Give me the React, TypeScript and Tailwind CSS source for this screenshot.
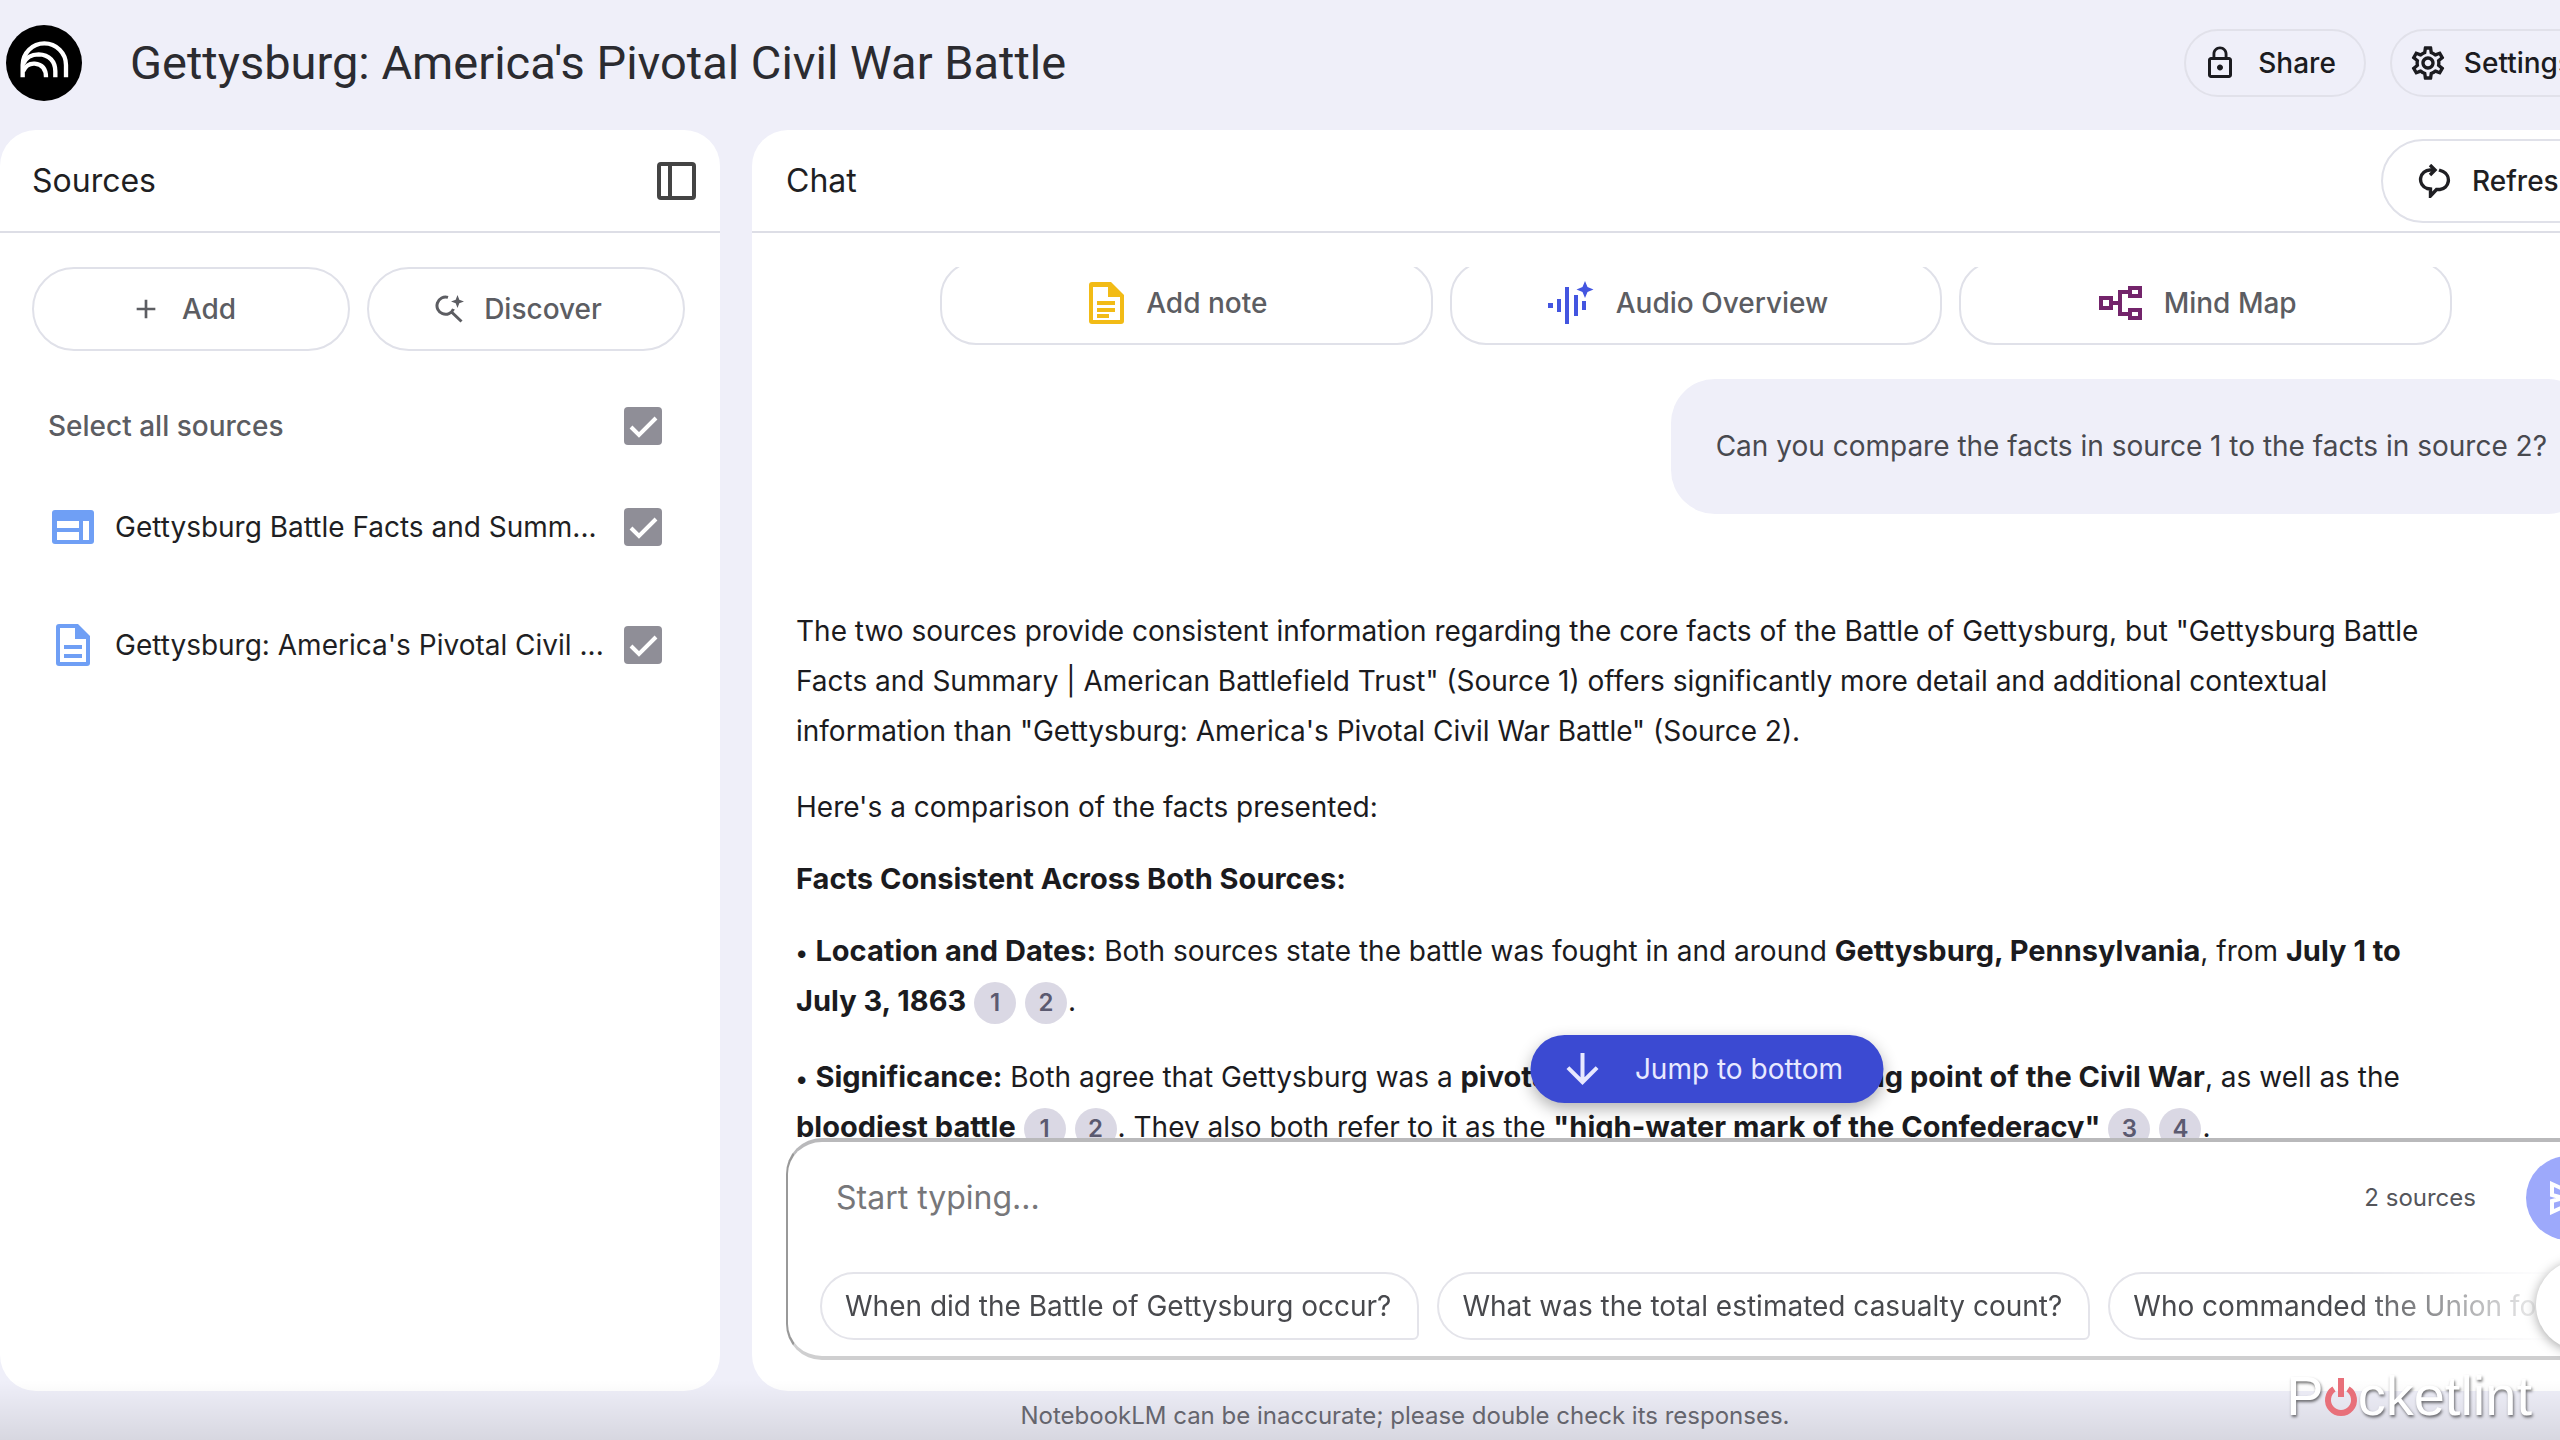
import type { ReactNode } from 'react';
import { MdAdd, MdArrowDownward, MdLockOutline, MdOutlineSettings } from 'react-icons/md';

function Logo() {
  return (
    <svg viewBox="18 45 228 228" className="size-[76px] shrink-0" role="img" aria-label="NotebookLM">
      <circle cx="132" cy="159" r="114" fill="#000" />
      <g fill="none" stroke="#fff" strokeWidth="13">
        <path d="M68 202V165A65 65 0 0 1 198 165V202" />
        <path d="M69 162C80 138 98 133 116 133C148 134 166 155 166 184V202" />
        <path d="M69 184C78 165 90 160 104 161C127 163 138 178 138 202" />
      </g>
    </svg>
  );
}

function PanelIcon() {
  return (
    <svg viewBox="0 0 39 38" className="h-[38px] w-[39px]" fill="none" stroke="#444" aria-hidden="true">
      <rect x="2" y="2" width="35" height="34" rx="2" strokeWidth="4" />
      <path d="M13 2V36" strokeWidth="4" />
    </svg>
  );
}

function DiscoverIcon() {
  return (
    <svg viewBox="0 0 30 28" className="h-7 w-[30px]" aria-hidden="true">
      <path
        d="M14 2.4A8.6 8.6 0 1 0 19.5 14M17 16.5L27.5 26.5"
        fill="none"
        stroke="currentColor"
        strokeWidth="3"
      />
      <path d="M23.5 0L25.3 4.7L30 6.5L25.3 8.3L23.5 13L21.7 8.3L17 6.5L21.7 4.7Z" fill="currentColor" />
    </svg>
  );
}

function RefreshIcon() {
  return (
    <svg
      viewBox="0 0 34 34"
      className="size-[34px]"
      fill="none"
      stroke="currentColor"
      strokeWidth="3.4"
      aria-hidden="true"
    >
      <path d="M16 6H12A9.5 9.5 0 0 0 9 24.5L12.5 25V32L18.5 25.5H22A9.5 9.5 0 0 0 25 7.5L21 6" />
      <path d="M12 1L17 6L12 11" />
    </svg>
  );
}

function WebIcon() {
  return (
    <svg viewBox="0 0 42 34" className="h-[34px] w-[42px]" aria-hidden="true">
      <rect width="42" height="34" rx="3" fill="#6f9ff5" />
      <path d="M5 11H27V18H5ZM5 22H27V30H5ZM31 11H37V30H31Z" fill="#fff" />
    </svg>
  );
}

function DocIcon() {
  return (
    <svg viewBox="0 0 34 42" className="h-[42px] w-[34px]" aria-hidden="true">
      <path d="M3 0H22L34 12V39a3 3 0 0 1-3 3H3a3 3 0 0 1-3-3V3a3 3 0 0 1 3-3Z" fill="#6f9ff5" />
      <path d="M4 4H19V15H30V38H4Z" fill="#fff" />
      <path d="M8 21H26V25H8ZM8 30H26V34H8Z" fill="#6f9ff5" />
    </svg>
  );
}

function NoteIcon() {
  return (
    <svg viewBox="0 0 35 42" className="h-[42px] w-[35px]" aria-hidden="true">
      <path d="M3 0H22L35 13V39a3 3 0 0 1-3 3H3a3 3 0 0 1-3-3V3a3 3 0 0 1 3-3Z" fill="#f2bb16" />
      <path d="M4 5H19V15H31V38H4Z" fill="#fff" />
      <path d="M8 19H26V23H8ZM8 26H26V30H8ZM8 32H20V36H8Z" fill="#f2bb16" />
    </svg>
  );
}

function AudioIcon() {
  return (
    <svg viewBox="26 18 46 44" className="h-11 w-[46px]" fill="#4355e0" aria-hidden="true">
      <path d="M26 40h5v5h-5zM35 36h4v13h-4zM43 24h4v37h-4zM52 32h4v21h-4zM60 38h4v9h-4z" />
      <path d="M63 18L65.5 24L71.5 26.5L65.5 29L63 35L60.5 29L54.5 26.5L60.5 24Z" />
    </svg>
  );
}

function MindMapIcon() {
  return (
    <svg
      viewBox="0 0 43 34"
      className="h-[34px] w-[43px]"
      fill="none"
      stroke="#73246b"
      strokeWidth="4"
      aria-hidden="true"
    >
      <path d="M2 12H12V22H2ZM31 2H41V10H31ZM31 24H41V32H31Z" />
      <path d="M12 17H21M31 6H21V28H31" />
    </svg>
  );
}

function SendIcon() {
  return (
    <svg viewBox="0 0 36 34" className="h-[34px] w-9" fill="none" stroke="#fff" strokeWidth="4" aria-hidden="true">
      <path d="M2 3L33 17L2 31V20L13 17L2 14Z" />
    </svg>
  );
}

function Checkbox({ id }: { id: string }) {
  return (
    <span className="grid shrink-0">
      <input
        id={id}
        type="checkbox"
        defaultChecked
        className="peer col-start-1 row-start-1 size-[38px] appearance-none rounded-sm bg-[#8f8e97]"
      />
      <svg
        viewBox="0 0 38 38"
        className="pointer-events-none invisible col-start-1 row-start-1 size-[38px] peer-checked:visible"
        fill="none"
        stroke="#fff"
        strokeWidth="4"
        aria-hidden="true"
      >
        <path d="M7 20L15 28L32 11" />
      </svg>
    </span>
  );
}

function SourceRow({ id, icon, title }: { id: string; icon: ReactNode; title: string }) {
  return (
    <li className="flex items-center">
      <span className="flex w-[42px] shrink-0 justify-center">{icon}</span>
      <label htmlFor={id} className="ml-[21px] flex-1 whitespace-nowrap text-[28px] leading-9 text-[#1f1f23]">
        {title}
      </label>
      <Checkbox id={id} />
    </li>
  );
}

function PillButton({ icon, children }: { icon: ReactNode; children: ReactNode }) {
  return (
    <button
      type="button"
      className="flex h-[84px] items-center justify-center gap-5 rounded-full border-2 border-[#e0e1e9] pr-4 text-[28px] font-medium text-[#5c5d62]"
    >
      {icon}
      {children}
    </button>
  );
}

function SourcesPanel() {
  return (
    <section className="flex w-[720px] shrink-0 flex-col rounded-[36px] bg-white">
      <div className="flex h-[103px] items-center justify-between border-b-2 border-[#dddee6] pr-6 pl-8">
        <h2 className="text-[32px] text-[#1f1f23]">Sources</h2>
        <button type="button" aria-label="Collapse sources">
          <PanelIcon />
        </button>
      </div>
      <div className="mt-[34px] grid grid-cols-2 gap-[17px] pr-[35px] pl-8">
        <PillButton icon={<MdAdd className="size-8" />}>Add</PillButton>
        <PillButton icon={<DiscoverIcon />}>Discover</PillButton>
      </div>
      <div className="mt-14 flex items-center justify-between pr-[58px] pl-12">
        <label htmlFor="all" className="text-[28px] leading-9 font-medium text-[#5c5d62]">
          Select all sources
        </label>
        <Checkbox id="all" />
      </div>
      <ul className="mt-[63px] flex flex-col gap-[78px] pr-[58px] pl-[52px]">
        <SourceRow id="s1" icon={<WebIcon />} title="Gettysburg Battle Facts and Summ..." />
        <SourceRow id="s2" icon={<DocIcon />} title="Gettysburg: America's Pivotal Civil ..." />
      </ul>
    </section>
  );
}

function Action({ icon, children }: { icon: ReactNode; children: ReactNode }) {
  return (
    <button
      type="button"
      className="flex h-[84px] items-center justify-center gap-[22px] rounded-[36px] border-2 border-[#e0e1e9] pr-4 text-[28px] font-medium text-[#5c5d62]"
    >
      {icon}
      {children}
    </button>
  );
}

function Cite({ n }: { n: number }) {
  return (
    <button
      type="button"
      className="mr-[9px] inline-flex size-[42px] items-center justify-center rounded-full bg-[#dad8e4] align-middle text-2xl font-semibold text-[#5b5a70]"
    >
      {n}
    </button>
  );
}

function Bold({ children }: { children: ReactNode }) {
  return <b className="text-[29px]">{children}</b>;
}

function Answer() {
  return (
    <div className="mt-[92px] ml-11 flex flex-col gap-[22px] text-[28px] leading-[50px] whitespace-nowrap text-[#1b1b1e]">
      <p>
        The two sources provide consistent information regarding the core facts of the Battle of Gettysburg, but
        "Gettysburg Battle
        <br />
        Facts and Summary | American Battlefield Trust" (Source 1) offers significantly more detail and additional
        contextual
        <br />
        information than "Gettysburg: America's Pivotal Civil War Battle" (Source 2).
      </p>
      <p className="mt-1">Here's a comparison of the facts presented:</p>
      <h3>
        <Bold>Facts Consistent Across Both Sources:</Bold>
      </h3>
      <p>
        <b className="mr-2 text-2xl">•</b>
        <Bold>Location and Dates:</Bold> Both sources state the battle was fought in and around{' '}
        <Bold>Gettysburg, Pennsylvania</Bold>, from <Bold>July 1 to</Bold>
        <br />
        <Bold>July 3, 1863</Bold> <Cite n={1} />
        <Cite n={2} />
        <span className="-ml-2">.</span>
      </p>
      <p className="mt-1">
        <b className="mr-2 text-2xl">•</b>
        <Bold>Significance:</Bold> Both agree that Gettysburg was a{' '}
        <Bold>pivotal moment and the turning point of the Civil War</Bold>, as well as the
        <br />
        <Bold>bloodiest battle</Bold> <Cite n={1} />
        <Cite n={2} />
        <span className="-ml-2">.</span> They also both refer to it as the{' '}
        <Bold>"high-water mark of the Confederacy"</Bold> <Cite n={3} />
        <Cite n={4} />
        <span className="-ml-2">.</span>
      </p>
    </div>
  );
}

function Composer() {
  const chips = [
    'When did the Battle of Gettysburg occur?',
    'What was the total estimated casualty count?',
    'Who commanded the Union forces?',
  ];
  return (
    <div className="relative mr-3 mb-[31px] ml-[34px] rounded-[36px] border-x-2 border-y-4 border-x-[#999] border-t-[#b9b9bb] border-b-[#cfcfd0] bg-white pt-[14px] pb-4">
      <button
        type="button"
        className="absolute -top-[107px] left-1/2 flex h-[68px] w-[353px] -translate-x-1/2 items-center justify-center gap-7 rounded-full bg-[#3b4ad2] pr-3 text-[28px] text-[#e8e9ff] shadow-[0_6px_16px_rgba(0,0,0,0.3)]"
      >
        <MdArrowDownward className="size-12" /> Jump to bottom
      </button>
      <div className="flex h-[84px] items-center pr-4 pl-12">
        <input
          type="text"
          aria-label="Message"
          placeholder="Start typing..."
          className="min-w-0 flex-1 text-[32px] outline-none placeholder:text-[#77777a]"
        />
        <span className="mr-[50px] text-2xl text-[#55565b]">2 sources</span>
        <button
          type="button"
          aria-label="Send"
          className="flex size-[84px] items-center justify-center rounded-full bg-[#9da9fb]"
        >
          <SendIcon />
        </button>
      </div>
      <div className="mt-8 mr-[68px] ml-8 flex gap-[18px] overflow-hidden [mask-image:linear-gradient(to_right,#000_88%,transparent)]">
        {chips.map((chip) => (
          <button
            key={chip}
            type="button"
            className="h-[68px] shrink-0 rounded-[34px] rounded-br-md border-2 border-[#e4e4ea] pr-[26px] pl-[23px] text-[28px] text-[#48494d]"
          >
            {chip}
          </button>
        ))}
      </div>
      <button
        type="button"
        aria-label="Next suggestions"
        className="absolute right-0 bottom-1.5 size-[90px] rounded-full bg-white shadow-[0_2px_12px_rgba(0,0,0,0.35)]"
      />
    </div>
  );
}

function ChatPanel() {
  return (
    <section className="flex min-w-0 flex-1 flex-col rounded-[36px] bg-white">
      <div className="flex h-[103px] shrink-0 items-center justify-between border-b-2 border-[#dddee6] pr-6 pl-[34px]">
        <h2 className="text-[32px] text-[#1f1f23]">Chat</h2>
        <button
          type="button"
          className="flex h-[84px] w-[235px] shrink-0 items-center gap-5 rounded-full border-2 border-[#e0e1e9] pl-[35px] text-[28px] font-medium text-[#1f1f23]"
        >
          <RefreshIcon /> Refresh
        </button>
      </div>
      <div className="mt-[34px] flex min-h-0 flex-1 flex-col overflow-hidden">
        <div className="-mt-1.5 grid shrink-0 grid-cols-3 gap-[17px] px-[188px]">
          <Action icon={<NoteIcon />}>Add note</Action>
          <Action icon={<AudioIcon />}>Audio Overview</Action>
          <Action icon={<MindMapIcon />}>Mind Map</Action>
        </div>
        <p className="mt-[34px] mr-12 self-end rounded-[44px] bg-[#efeff9] px-[45px] py-[42px] text-[28px] leading-[51px] whitespace-nowrap text-[#48494f]">
          Can you compare the facts in source 1 to the facts in source 2?
        </p>
        <Answer />
      </div>
      <Composer />
    </section>
  );
}

function Watermark() {
  return (
    <div className="absolute right-7 bottom-3.5 flex items-center font-['Liberation_Sans',sans-serif] text-[56px] leading-[60px] text-white [text-shadow:1px_2px_3px_rgba(0,0,0,0.55)]">
      P
      <svg
        viewBox="0 0 34 42"
        className="h-[42px] w-[34px]"
        fill="none"
        stroke="#e8707a"
        strokeWidth="6"
        role="img"
        aria-label="o"
      >
        <path d="M10 14A13 13 0 1 0 24 14M17 3V22" />
      </svg>
      cketlint
    </div>
  );
}

export default function App() {
  return (
    <div className="relative flex h-screen flex-col overflow-hidden bg-[#efeff9] font-[Inter,sans-serif]">
      <div className="pointer-events-none absolute inset-x-0 bottom-0 h-[60px] bg-linear-to-b from-transparent to-black/10" />
      <header className="-mr-20 flex h-[130px] shrink-0 items-center justify-between pr-[37px] pb-1 pl-[6px]">
        <div className="flex items-center gap-12">
          <Logo />
          <h1 className="font-[Roboto,sans-serif] text-[47px] text-[#2b2b30]">
            Gettysburg: America's Pivotal Civil War Battle
          </h1>
        </div>
        <div className="flex gap-6 text-[28px] font-medium text-[#1b1b20]">
          <button
            type="button"
            className="flex h-[68px] items-center gap-5 rounded-full border-2 border-[#e1e1ea] pr-7 pl-4"
          >
            <MdLockOutline className="size-9" /> Share
          </button>
          <button
            type="button"
            className="flex h-[68px] items-center gap-4 rounded-full border-2 border-[#e1e1ea] pr-7 pl-4"
          >
            <MdOutlineSettings className="size-10" /> Settings
          </button>
        </div>
      </header>
      <main className="-mr-20 flex min-h-0 flex-1 gap-8">
        <SourcesPanel />
        <ChatPanel />
      </main>
      <footer className="flex h-[49px] shrink-0 items-center justify-center pl-[250px] text-2xl text-[#6b6b74]">
        NotebookLM can be inaccurate; please double check its responses.
      </footer>
      <Watermark />
    </div>
  );
}
